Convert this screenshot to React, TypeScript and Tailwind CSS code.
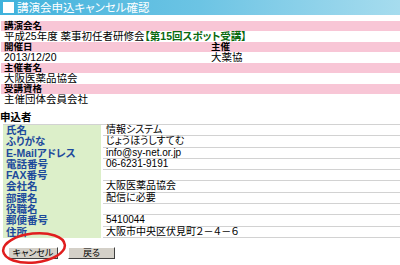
import React from "react";

const applicant: [string, string][] = [
  ["氏名", "情報システム"],
  ["ふりがな", "じょうほうしすてむ"],
  ["E-Mailアドレス", "info@sy-net.or.jp"],
  ["電話番号", "06-6231-9191"],
  ["FAX番号", ""],
  ["会社名", "大阪医薬品協会"],
  ["部課名", "配信に必要"],
  ["役職名", ""],
  ["郵便番号", "5410044"],
  ["住所", "大阪市中央区伏見町２－４－６"],
];

const Head = ({ children }: { children: React.ReactNode }) => (
  <div className="h-[10px] bg-[#f8c6d6] pl-[3px] font-bold text-black whitespace-nowrap">
    <div className="relative -top-[0.5px] text-[9.5px] leading-[10px]">{children}</div>
  </div>
);

const Val = ({ children }: { children?: React.ReactNode }) => (
  <div className="h-[11px] leading-[11px] bg-white pl-[3px] text-black whitespace-nowrap">{children}</div>
);

const App = () => {
  return (
    <div
      className="relative w-[400px] h-[265px] overflow-hidden bg-white text-[10.5px] [font-feature-settings:'palt']"
      style={{ fontFamily: '"Liberation Sans", "Noto Sans CJK JP", sans-serif' }}
    >
      {/* title bar */}
      <div className="h-[15px] bg-gradient-to-r from-[#3fb2dc] via-[#6cc4e4] to-[#a6dcee] flex items-center text-white text-[11.5px] leading-[14px] pl-[3px]">
        <span className="inline-block w-[11px] h-[11px] bg-white mr-[3px]" />
        <span>講演会申込キャンセル確認</span>
      </div>

      {/* lecture info */}
      <div className="mt-[6px] ml-[1px] grid grid-cols-[207px_1fr]">
        <div className="col-span-2"><Head>講演会名</Head></div>
        <div className="col-span-2">
          <Val>
            平成25年度 薬事初任者研修会
            <span className="font-bold text-[#0a6a10]">【第15回スポット受講】</span>
          </Val>
        </div>
        <Head>開催日</Head>
        <Head>主催</Head>
        <Val>2013/12/20</Val>
        <Val>大薬協</Val>
        <div className="col-span-2"><Head>主催者名</Head></div>
        <div className="col-span-2"><Val>大阪医薬品協会</Val></div>
        <div className="col-span-2"><Head>受講資格</Head></div>
        <div className="col-span-2"><Val>主催団体会員会社</Val></div>
      </div>

      {/* applicant */}
      <div className="mt-[7px] h-[11px] leading-[11px] font-bold text-black">申込者</div>
      <div className="ml-[3px] mt-[1px] border-t border-[#d2d2d2]">
        {applicant.map(([k, v]) => (
          <div key={k} className="flex h-[11.3px]">
            <div className="w-[98px] bg-[#dcefc9] pl-[3px] leading-[11px] font-bold text-[#1d4a9c] whitespace-nowrap">{k}</div>
            <div className="ml-[2px] flex-1 border-b border-[#d2d2d2] pl-[3px] text-[10px] leading-[10px] text-black whitespace-nowrap">{v}</div>
          </div>
        ))}
      </div>

      {/* buttons */}
      <div className="mt-[9px] ml-[8px] flex gap-[10px]">
        <button className="w-[50px] h-[12px] bg-[#d4d0c8] border border-t-white border-l-white border-r-[#404040] border-b-[#404040] text-[9px] leading-[10px] text-black">
          キャンセル
        </button>
        <button className="w-[47px] h-[12px] bg-[#d4d0c8] border border-t-white border-l-white border-r-[#404040] border-b-[#404040] text-[9px] leading-[10px] text-black">
          戻る
        </button>
      </div>

      {/* red annotation circle */}
      <svg className="absolute left-0 top-[228px]" width="80" height="37" viewBox="0 0 80 37">
        <ellipse cx="34" cy="20" rx="31" ry="14.5" fill="none" stroke="#e01e1e" strokeWidth="2.5" transform="rotate(-6 34 20)" />
      </svg>
    </div>
  );
};

export default App;
